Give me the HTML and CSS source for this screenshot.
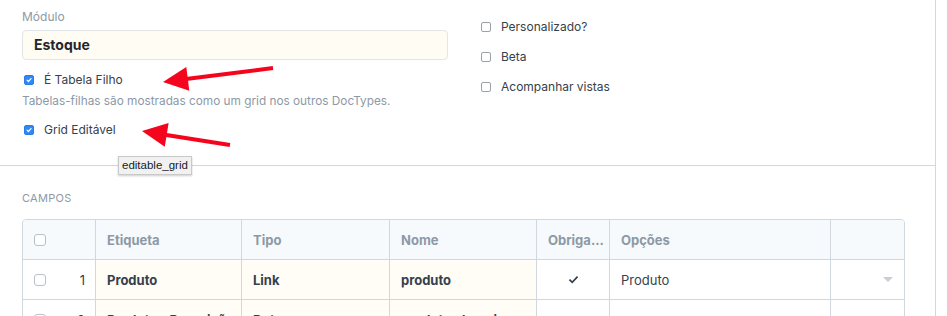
FILE: index.html
```html
<!DOCTYPE html>
<html lang="pt">
<head>
<meta charset="utf-8">
<title>DocType</title>
<link rel="stylesheet" href="styles.css">
</head>
<body>
<div class="page">
  <section class="top">
    <div class="col-left">
      <div class="field-label">Módulo</div>
      <div class="input">Estoque</div>
      <div class="check-row first">
        <span class="cb checked"><svg viewBox="0 0 10 10"><path d="M2.6 5.2 L4.3 6.9 L7.5 3.2" /></svg></span>
        <span class="cb-label">É Tabela Filho</span>
      </div>
      <div class="help">Tabelas-filhas são mostradas como um grid nos outros DocTypes.</div>
      <div class="check-row second">
        <span class="cb checked"><svg viewBox="0 0 10 10"><path d="M2.6 5.2 L4.3 6.9 L7.5 3.2" /></svg></span>
        <span class="cb-label">Grid Editável</span>
      </div>
    </div>
    <div class="col-right">
      <div class="check-row">
        <span class="cb"></span>
        <span class="cb-label">Personalizado?</span>
      </div>
      <div class="check-row">
        <span class="cb"></span>
        <span class="cb-label">Beta</span>
      </div>
      <div class="check-row">
        <span class="cb"></span>
        <span class="cb-label">Acompanhar vistas</span>
      </div>
    </div>
  </section>

  <section class="fields">
    <div class="section-head">Campos</div>
    <div class="grid">
      <div class="row head">
        <div class="cell idx"><span class="gcb"></span></div>
        <div class="cell">Etiqueta</div>
        <div class="cell">Tipo</div>
        <div class="cell">Nome</div>
        <div class="cell">Obriga...</div>
        <div class="cell">Opções</div>
        <div class="cell"></div>
      </div>
      <div class="row body">
        <div class="cell idx"><span class="gcb"></span><span class="num">1</span></div>
        <div class="cell edit">Produto</div>
        <div class="cell edit">Link</div>
        <div class="cell edit">produto</div>
        <div class="cell center"><svg class="tick" viewBox="0 0 12 10"><path d="M1.5 5.2 L4.6 8.2 L10.5 1.8" /></svg></div>
        <div class="cell normal">Produto</div>
        <div class="cell right"><span class="caret"></span></div>
      </div>
      <div class="row body">
        <div class="cell idx"><span class="gcb"></span><span class="num">2</span></div>
        <div class="cell edit">Produto - Descrição</div>
        <div class="cell edit">Data</div>
        <div class="cell edit">produto_descricao</div>
        <div class="cell center"></div>
        <div class="cell normal"></div>
        <div class="cell right"></div>
      </div>
    </div>
  </section>

  <div class="tooltip">editable_grid</div>

  <svg class="arrows" width="947" height="316" viewBox="0 0 947 316">
    <line x1="273" y1="68" x2="182" y2="79.6" />
    <polygon points="163,82 186.3,67 189.3,90.8" />
    <line x1="230" y1="145" x2="160" y2="134" />
    <polygon points="142,131 168.6,123 164.8,146.8" />
  </svg>
</div>
</body>
</html>
```

FILE: styles.css
```css
* { box-sizing: border-box; }

html, body {
  margin: 0;
  padding: 0;
  background: #fff;
}

body {
  font-family: Inter, "Noto Sans", "Liberation Sans", sans-serif;
  color: #36414c;
  font-size: 13px;
}

.page {
  position: relative;
  width: 936px;
  height: 316px;
  overflow: hidden;
  border-right: 1px solid #d1d8dd;
}

/* top section */
.top {
  display: grid;
  grid-template-columns: 426px 1fr;
  column-gap: 31px;
  padding: 9px 22px 0 22px;
  height: 166px;
  border-bottom: 1px solid #d1d8dd;
}

.field-label {
  font-size: 12px;
  line-height: 16px;
  color: #8d99a6;
  margin-bottom: 5px;
}

.input {
  height: 30px;
  background: #fffcf3;
  border: 1px solid #e2e6e9;
  border-radius: 4px;
  padding-left: 11px;
  font-size: 14px;
  font-weight: 700;
  line-height: 28px;
  color: #1f272e;
}

.check-row {
  display: flex;
  align-items: center;
  gap: 10px;
  height: 20px;
  padding-left: 2px;
}

.check-row.first { margin-top: 10px; }
.check-row.second { margin-top: 11px; }

.col-right {
  padding-top: 8px;
  display: flex;
  flex-direction: column;
  gap: 10px;
}

.cb {
  width: 10px;
  height: 10px;
  flex: none;
  border: 1px solid #9aa1a8;
  border-radius: 2px;
  background: #fff;
  display: flex;
}

.cb.checked {
  background: #2f88f5;
  border-color: #2a7ee6;
}

.cb svg {
  width: 100%;
  height: 100%;
}

.cb svg path {
  fill: none;
  stroke: #fff;
  stroke-width: 1.5;
  stroke-linecap: round;
  stroke-linejoin: round;
}

.cb-label {
  font-size: 12px;
  line-height: 20px;
  color: #36414c;
}

.help {
  margin-top: 3px;
  font-size: 11.8px;
  line-height: 16px;
  color: #8d99a6;
}

/* fields */
.fields {
  padding: 24px 0 0 22px;
}

.section-head {
  font-size: 11px;
  line-height: 16px;
  text-transform: uppercase;
  letter-spacing: 0.3px;
  color: #8d99a6;
  margin-bottom: 13px;
}

.grid {
  width: 883px;
  border: 1px solid #d1d8dd;
  border-radius: 4px 4px 0 0;
  overflow: hidden;
}

.row {
  display: grid;
  grid-template-columns: 72px 146px 148px 147px 73px 221px 1fr;
  height: 40px;
  border-bottom: 1px solid #d1d8dd;
}

.row.head {
  background: #f7fafc;
  color: #8d99a6;
  font-weight: 700;
}

.row.body {
  color: #36414c;
  font-weight: 700;
}

.cell {
  display: flex;
  align-items: center;
  padding-left: 11px;
  font-size: 13px;
  border-left: 1px solid #d1d8dd;
  white-space: nowrap;
  overflow: hidden;
}

.cell:first-child { border-left: none; }

.cell.idx {
  padding-left: 11px;
  padding-right: 10px;
  justify-content: space-between;
}

.cell.edit { background: #fffdf5; }

.cell.normal { font-weight: 400; }

.cell.center {
  justify-content: center;
  padding-left: 0;
}

.cell.right {
  justify-content: flex-end;
  padding-right: 11px;
}

.num {
  font-weight: 400;
  color: #36414c;
}

.gcb {
  width: 12px;
  height: 12px;
  border: 1px solid #b8c0c8;
  border-radius: 3px;
  background: #fff;
}

.tick {
  width: 11px;
  height: 9px;
}

.tick path {
  fill: none;
  stroke: #36414c;
  stroke-width: 1.9;
}

.caret {
  width: 0;
  height: 0;
  border-left: 5px solid transparent;
  border-right: 5px solid transparent;
  border-top: 5px solid #c8ced3;
}

/* overlays */
.tooltip {
  position: absolute;
  left: 118px;
  top: 156px;
  height: 19px;
  padding: 0 3px;
  font-family: "Liberation Sans", Arial, sans-serif;
  font-size: 11.5px;
  line-height: 17px;
  color: #1a1a1a;
  background: #f1f1f1;
  border: 1px solid #c9c9c9;
  box-shadow: 0 1px 2px rgba(0,0,0,0.2);
}

.arrows {
  position: absolute;
  left: 0;
  top: 0;
  pointer-events: none;
}

.arrows line {
  stroke: #f5051d;
  stroke-width: 4;
}

.arrows polygon {
  fill: #f5051d;
}
```
